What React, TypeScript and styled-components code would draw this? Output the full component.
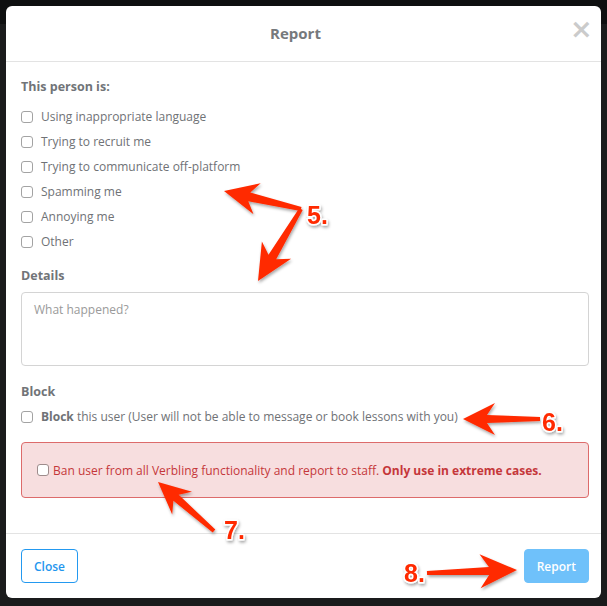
import React from 'react';
import styled, { createGlobalStyle } from 'styled-components';

const GlobalStyle = createGlobalStyle`
	html, body {
		margin: 0;
		padding: 0;
		background: #141516;
	}
	* {
		box-sizing: border-box;
	}
`;

const Page = styled.div`
	position: relative;
	width: 607px;
	height: 606px;
	padding: 6px 6px 0 6px;
	background: linear-gradient(#0e0f10 0, #0e0f10 24px, #1a1b1c 24px, #1a1b1c 100%);
	font-family: 'Open Sans', 'Liberation Sans', sans-serif;
`;

const Modal = styled.div`
	width: 595px;
	height: 592px;
	background: #fff;
	border-radius: 6px;
	display: flex;
	flex-direction: column;
	overflow: hidden;
`;

const Header = styled.div`
	height: 56px;
	border-bottom: 1px solid #e3e3e3;
	display: flex;
	align-items: center;
	padding: 0 15px 2px 15px;
`;

const Title = styled.h4`
	flex: 1;
	text-align: center;
	margin: 0;
	font-size: 15px;
	font-weight: 700;
	color: #76797c;
`;

const CloseX = styled.span`
	width: 16px;
	text-align: center;
	font-family: 'DejaVu Sans', sans-serif;
	font-size: 27px;
	font-weight: 700;
	line-height: 1;
	color: #cbcbcb;
	margin-top: -9px;
`;

const Body = styled.div`
	flex: 1;
	padding: 16px 12px 0 15px;
	display: flex;
	flex-direction: column;
`;

const FieldLabel = styled.div<{ $top?: number; $bottom?: number }>`
	margin-top: ${p => p.$top || 0}px;
	margin-bottom: ${p => (p.$bottom !== undefined ? p.$bottom : 8)}px;
	font-size: 12.5px;
	font-weight: 700;
	line-height: 18px;
	color: #717478;
`;

const Row = styled.label`
	height: 25px;
	display: flex;
	align-items: center;
	gap: 8px;
	font-size: 12px;
	color: #6f7276;
`;

const Check = styled.input.attrs({ type: 'checkbox' })<{ $danger?: boolean }>`
	appearance: none;
	margin: 0;
	width: 12px;
	height: 12px;
	border: 1px solid ${p => (p.$danger ? '#9e8c8c' : '#a3a3a3')};
	border-radius: 3px;
	background: #fff;
	flex-shrink: 0;
`;

const TextArea = styled.textarea`
	width: 568px;
	height: 74px;
	border: 1px solid #d4d4d4;
	border-radius: 4px;
	resize: none;
	padding: 8px 12px;
	font-family: 'Open Sans', 'Liberation Sans', sans-serif;
	font-size: 12px;
	color: #555;
	&::placeholder {
		color: #9a9a9a;
	}
`;

const Strong = styled.b`
	font-weight: 700;
`;

const DangerBox = styled.label`
	margin-top: 13px;
	width: 568px;
	height: 56px;
	background: #f7dedf;
	border: 1px solid #dd6b6b;
	border-radius: 4px;
	display: flex;
	align-items: center;
	gap: 4px;
	padding: 0 0 0 15px;
	font-size: 12px;
	color: #c5373a;
`;

const Footer = styled.div`
	height: 65px;
	border-top: 1px solid #e3e3e3;
	padding: 15px 12px 0 15px;
	display: flex;
	justify-content: space-between;
	align-items: flex-start;
`;

const Button = styled.button<{ $primary?: boolean }>`
	height: 34px;
	padding: 0 ${p => (p.$primary ? 12 : 12)}px;
	border-radius: 4px;
	font-family: 'Open Sans', 'Liberation Sans', sans-serif;
	font-size: 12px;
	font-weight: 600;
	border: 1px solid ${p => (p.$primary ? '#6fc1fa' : '#2399f0')};
	background: ${p => (p.$primary ? '#6fc1fa' : '#fff')};
	color: ${p => (p.$primary ? '#fff' : '#1f96ee')};
`;

const Overlay = styled.svg`
	position: absolute;
	left: 0;
	top: 0;
	pointer-events: none;
`;

const Marker = styled.text`
	font-family: 'Liberation Sans', Arial, sans-serif;
	font-weight: 700;
	font-size: 25px;
	fill: #ff2a00;
	stroke: #fff;
	stroke-width: 3px;
	paint-order: stroke;
	stroke-linejoin: round;
`;

type Arrow = { x1: number; y1: number; x2: number; y2: number; head: number; half: number; neck: number; tailW: number; neckW: number };

const arrowPoints = (a: Arrow) => {
	const dx = a.x2 - a.x1;
	const dy = a.y2 - a.y1;
	const l = Math.hypot(dx, dy);
	const ux = dx / l, uy = dy / l;
	const nx = -uy, ny = ux;
	const bx = a.x2 - ux * a.head, by = a.y2 - uy * a.head;
	const kx = a.x2 - ux * a.neck, ky = a.y2 - uy * a.neck;
	const pts = [
		[a.x2, a.y2],
		[bx + nx * a.half, by + ny * a.half],
		[kx + nx * a.neckW / 2, ky + ny * a.neckW / 2],
		[a.x1 + nx * a.tailW / 2, a.y1 + ny * a.tailW / 2],
		[a.x1 - nx * a.tailW / 2, a.y1 - ny * a.tailW / 2],
		[kx - nx * a.neckW / 2, ky - ny * a.neckW / 2],
		[bx - nx * a.half, by - ny * a.half],
	];
	return pts.map(p => p.map(v => v.toFixed(1)).join(',')).join(' ');
};

const arrows: Arrow[] = [
	{ x1: 301, y1: 209, x2: 224, y2: 191, head: 34, half: 16, neck: 26, tailW: 4, neckW: 9 },
	{ x1: 301, y1: 209, x2: 258, y2: 281, head: 36, half: 17, neck: 28, tailW: 4, neckW: 9 },
	{ x1: 540, y1: 419, x2: 463, y2: 419, head: 32, half: 16, neck: 24, tailW: 4, neckW: 8 },
	{ x1: 214, y1: 531, x2: 158, y2: 482, head: 32, half: 15, neck: 24, tailW: 4, neckW: 8 },
	{ x1: 427, y1: 573, x2: 517, y2: 570, head: 37, half: 17, neck: 28, tailW: 4, neckW: 8 },
];

const markers = [
	{ x: 307, y: 224, label: '5.' },
	{ x: 542, y: 431, label: '6.' },
	{ x: 224, y: 539, label: '7.' },
	{ x: 404, y: 582, label: '8.' },
];

const reasons = [
	'Using inappropriate language',
	'Trying to recruit me',
	'Trying to communicate off-platform',
	'Spamming me',
	'Annoying me',
	'Other',
];

const App: React.FC = () => {
	return (
		<Page>
			<GlobalStyle />
			<Modal>
				<Header>
					<Title>Report</Title>
					<CloseX>×</CloseX>
				</Header>
				<Body>
					<FieldLabel>This person is:</FieldLabel>
					{reasons.map(r => (
						<Row key={r}>
							<Check />
							{r}
						</Row>
					))}
					<FieldLabel $top={13} $bottom={7}>Details</FieldLabel>
					<TextArea placeholder="What happened?" />
					<FieldLabel $top={17} $bottom={3}>Block</FieldLabel>
					<Row>
						<Check />
						<span>
							<Strong>Block</Strong> this user (User will not be able to message or book lessons with you)
						</span>
					</Row>
					<DangerBox>
						<Check $danger />
						<span>
							Ban user from all Verbling functionality and report to staff. <Strong>Only use in extreme cases.</Strong>
						</span>
					</DangerBox>
				</Body>
				<Footer>
					<Button>Close</Button>
					<Button $primary>Report</Button>
				</Footer>
			</Modal>
			<Overlay width={607} height={606} viewBox="0 0 607 606">
				<defs>
					<filter id="shadow" x="-20%" y="-20%" width="140%" height="140%">
						<feDropShadow dx="1" dy="2" stdDeviation="1.5" floodColor="#000" floodOpacity="0.35" />
					</filter>
				</defs>
				<g filter="url(#shadow)">
					{arrows.map((a, i) => (
						<polygon key={i} points={arrowPoints(a)} fill="#ff2a00" strokeLinejoin="round" />
					))}
					{markers.map(m => (
						<Marker key={m.label} x={m.x} y={m.y}>
							{m.label}
						</Marker>
					))}
				</g>
			</Overlay>
		</Page>
	);
};

export default App;
